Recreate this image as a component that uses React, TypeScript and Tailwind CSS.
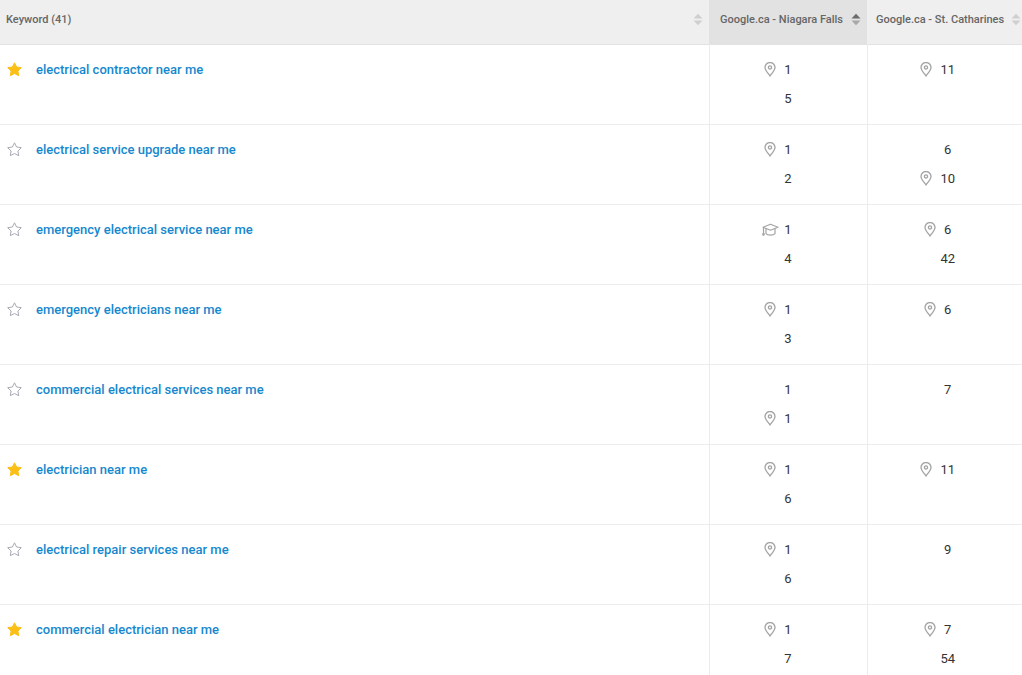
import { FC } from 'react';

type Rank = { value: number; icon?: 'pin' | 'cap' };

type Row = {
	keyword: string;
	starred: boolean;
	niagara: Rank[];
	catharines: Rank[];
};

const rows: Row[] = [
	{
		keyword: 'electrical contractor near me',
		starred: true,
		niagara: [{ value: 1, icon: 'pin' }, { value: 5 }],
		catharines: [{ value: 11, icon: 'pin' }],
	},
	{
		keyword: 'electrical service upgrade near me',
		starred: false,
		niagara: [{ value: 1, icon: 'pin' }, { value: 2 }],
		catharines: [{ value: 6 }, { value: 10, icon: 'pin' }],
	},
	{
		keyword: 'emergency electrical service near me',
		starred: false,
		niagara: [{ value: 1, icon: 'cap' }, { value: 4 }],
		catharines: [{ value: 6, icon: 'pin' }, { value: 42 }],
	},
	{
		keyword: 'emergency electricians near me',
		starred: false,
		niagara: [{ value: 1, icon: 'pin' }, { value: 3 }],
		catharines: [{ value: 6, icon: 'pin' }],
	},
	{
		keyword: 'commercial electrical services near me',
		starred: false,
		niagara: [{ value: 1 }, { value: 1, icon: 'pin' }],
		catharines: [{ value: 7 }],
	},
	{
		keyword: 'electrician near me',
		starred: true,
		niagara: [{ value: 1, icon: 'pin' }, { value: 6 }],
		catharines: [{ value: 11, icon: 'pin' }],
	},
	{
		keyword: 'electrical repair services near me',
		starred: false,
		niagara: [{ value: 1, icon: 'pin' }, { value: 6 }],
		catharines: [{ value: 9 }],
	},
	{
		keyword: 'commercial electrician near me',
		starred: true,
		niagara: [{ value: 1, icon: 'pin' }, { value: 7 }],
		catharines: [{ value: 7, icon: 'pin' }, { value: 54 }],
	},
];

const STAR =
	'M7.5 .8 9.6 5 14.3 5.7 10.9 9 11.7 13.7 7.5 11.5 3.3 13.7 4.1 9 .7 5.7 5.4 5Z';

const Star: FC<{ filled: boolean }> = ({ filled }) => (
	<svg width="15" height="15" viewBox="0 0 15 15" className="block">
		<path
			d={STAR}
			fill={filled ? '#fbbf16' : 'none'}
			stroke={filled ? '#fbbf16' : '#a9a9b4'}
			strokeWidth="1"
			strokeLinejoin="round"
		/>
	</svg>
);

const Pin: FC = () => (
	<svg width="12" height="15" viewBox="0 0 12 15" fill="none" stroke="#a3a3a3" strokeWidth="1.3">
		<path d="M6 14C4.2 11.3 1 8.4 1 5.5a5 5 0 0 1 10 0C11 8.4 7.8 11.3 6 14Z" />
		<circle cx="6" cy="5.4" r="1.6" />
	</svg>
);

const Cap: FC = () => (
	<svg width="17" height="14" viewBox="0 0 17 14" fill="none" stroke="#a3a3a3" strokeWidth="1.2">
		<path d="M8.5 1.2 16 4.2 8.5 7.2 1 4.2Z" strokeLinejoin="round" />
		<path d="M4 5.6V10.6C5.6 12.6 11.4 12.6 13 10.6V5.6" />
		<path d="M1.5 4.6V10.5" />
		<circle cx="1.5" cy="11.4" r="0.8" />
	</svg>
);

const SortIcon: FC<{ active?: boolean }> = ({ active }) => (
	<svg width="10" height="13" viewBox="0 0 10 13" className="block shrink-0">
		<path d="M5 .8 9.5 5.6H.5Z" fill={active ? '#6b6b6b' : '#cfcfcf'} />
		<path d="M5 12.2 9.5 7.4H.5Z" fill={active ? '#a8a8a8' : '#cfcfcf'} />
	</svg>
);

const RankCell: FC<{ ranks: Rank[]; className?: string }> = ({ ranks, className }) => (
	<td className={`border-l border-[#ececec] p-0 pt-[10px] align-top text-center ${className ?? ''}`}>
		{ranks.map((rank, i) => (
			<div key={i} className="h-[29px] leading-[29px]">
				<span className="relative inline-block">
					{rank.icon && (
						<span
							className={
								rank.icon === 'cap'
									? 'absolute right-[calc(100%+5px)] top-[8px]'
									: 'absolute right-[calc(100%+8px)] top-[7px]'
							}
						>
							{rank.icon === 'cap' ? <Cap /> : <Pin />}
						</span>
					)}
					{rank.value}
				</span>
			</div>
		))}
	</td>
);

export default function App() {
	return (
		<div className="w-[1022px] h-[675px] overflow-hidden bg-white font-['Roboto',sans-serif] text-[13px] text-[#333333]">
			<table className="table-fixed border-collapse w-[1027px]">
				<thead>
					<tr className="h-[44px] border-b border-[#e2e2e2] bg-[#efefef] text-[11px] font-medium text-[#666666]">
						<th className="w-[709px] p-0 pb-[4px] pl-[6px] pr-[6px] font-medium">
							<div className="flex flex-row justify-between items-center">
								<span>Keyword (41)</span>
								<SortIcon />
							</div>
						</th>
						<th className="w-[158px] p-0 pb-[4px] pl-[11px] pr-[6px] font-medium bg-[#e2e2e2]">
							<div className="flex flex-row justify-between items-center">
								<span>Google.ca - Niagara Falls</span>
								<SortIcon active />
							</div>
						</th>
						<th className="w-[160px] p-0 pb-[4px] pl-[9px] pr-[6px] font-medium">
							<div className="flex flex-row justify-between items-center">
								<span>Google.ca - St. Catharines</span>
								<SortIcon />
							</div>
						</th>
					</tr>
				</thead>
				<tbody>
					{rows.map((row) => (
						<tr key={row.keyword} className="h-[80px] border-b border-[#ececec]">
							<td className="p-0 pt-[17px] align-top">
								<div className="flex flex-row items-center">
									<span className="ml-[7px] w-[29px]">
										<Star filled={row.starred} />
									</span>
									<a href="#" className="font-medium text-[#1688ce] leading-[15px]">
										{row.keyword}
									</a>
								</div>
							</td>
							<RankCell ranks={row.niagara} />
							<RankCell ranks={row.catharines} className="pl-[1px]" />
						</tr>
					))}
				</tbody>
			</table>
		</div>
	);
}
